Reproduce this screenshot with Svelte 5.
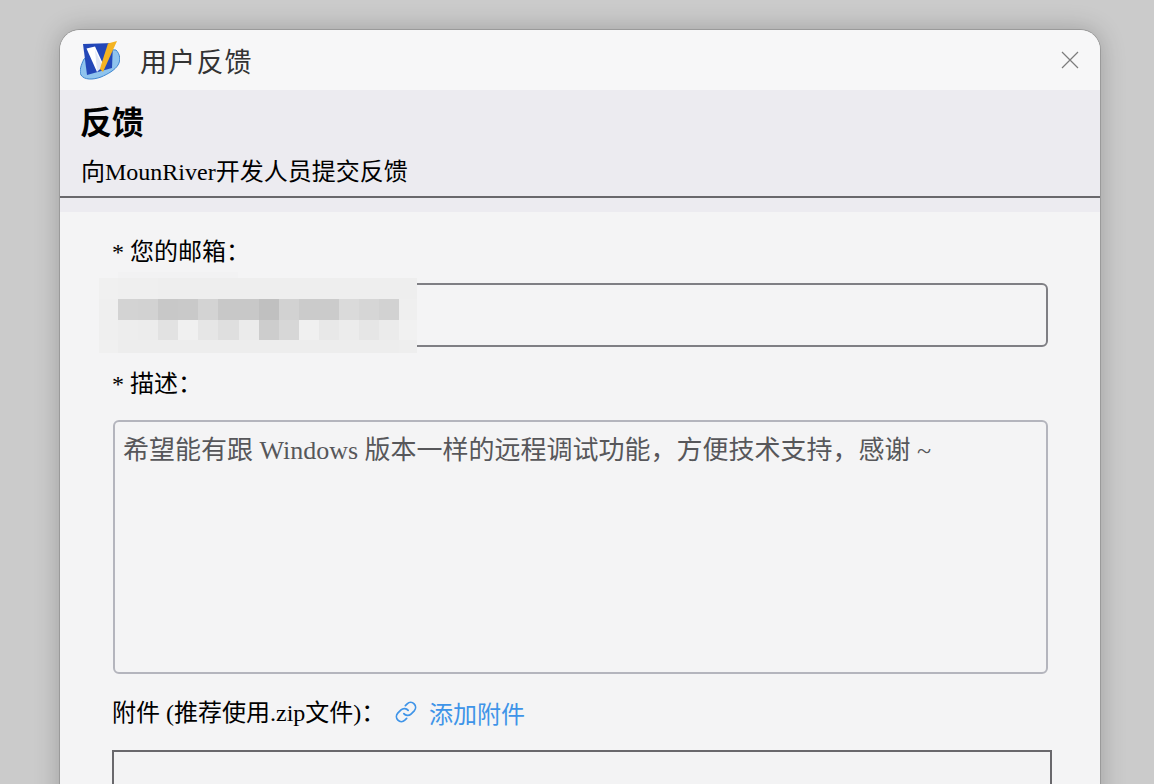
<script>
  // pixelated block hiding the e-mail address
  const mosaic = [
    ['#f0f0f0','#efefef','#efefef','#eeeeee','#eeeeee','#eeeeee','#eeeeee','#eeeeee','#eeeeee','#eeeeee','#eeeeee','#eeeeee','#eeeeee','#eeeeee','#eeeeee','#eeeeee'],
    ['#efefef','#d3d3d3','#d2d2d2','#c8c8c8','#c9c9c9','#d3d3d3','#c8c8c8','#c8c8c8','#c0c0c0','#d2d2d2','#cbcbcb','#cbcbcb','#dadada','#d6d6d6','#d2d2d2','#efefef'],
    ['#efefef','#ededed','#ececec','#e2e2e2','#f0f0f0','#e6e6e6','#dfdfdf','#ebebeb','#cdcdcd','#d7d7d7','#f0f0f0','#e8e8e8','#ececec','#e6e6e6','#ebebeb','#f1f1f1'],
    ['#f0f0f0','#ededed','#ededed','#ededed','#ededed','#ededed','#ededed','#ededed','#ededed','#ededed','#ededed','#ededed','#ededed','#ededed','#ededed','#eeeeee']
  ];
</script>

<div class="desk">
  <div class="window">
    <div class="titlebar">
      <svg class="logo" viewBox="0 0 40 40" width="40" height="40">
        <path d="M4 18 C1 24 -1 30 1 34 C4 39 13 39 21 36 C28 33 35 29 38 24 C41 19 40 13 36 9 L20 8 Z" fill="#8fc4ee" stroke="#3f86cf" stroke-width="1"/>
        <path d="M3 3 L33 2 L32 27 L7 34 Z" fill="#2347b8"/>
        <path d="M6.5 7.5 L15 5.5 L23.5 24 L17 31 Z" fill="#fff"/>
        <path d="M15 9 L23 26 L17 30 Z" fill="#dfe6f5"/>
        <path d="M28 2.5 L37 0 L23 31 L20 28 L21.7 22 Z" fill="#f4b321"/>
      </svg>
      <span class="app-title">用户反馈</span>
      <svg class="close" viewBox="0 0 18 18" width="18" height="18">
        <path d="M1 1 L17 17 M17 1 L1 17" stroke="#7c7c7c" stroke-width="1.2" fill="none"/>
      </svg>
    </div>

    <div class="head">
      <h1>反馈</h1>
      <p>向MounRiver开发人员提交反馈</p>
    </div>

    <div class="form">
      <label class="email-label" for="email">* 您的邮箱：</label>
      <div class="email-wrap">
        <input id="email" type="text" />
        <div class="mosaic">
          {#each mosaic as row}
            {#each row as c}
              <i style="background:{c}"></i>
            {/each}
          {/each}
        </div>
      </div>

      <label class="desc-label" for="desc">* 描述：</label>
      <textarea id="desc">希望能有跟 Windows 版本一样的远程调试功能，方便技术支持，感谢 ~</textarea>

      <div class="attach">
        <span>附件 (推荐使用.zip文件)：</span>
        <a href="#add">
          <svg viewBox="0 0 24 24" width="26" height="26" fill="none" stroke="#3f94e8" stroke-width="1.6" stroke-linecap="round" stroke-linejoin="round">
            <path d="M10 13.5a4.5 4.5 0 0 0 6.6.4l3-3a4.6 4.6 0 0 0-6.5-6.5l-1.7 1.7"/>
            <path d="M14 10.5a4.5 4.5 0 0 0-6.6-.4l-3 3a4.6 4.6 0 0 0 6.5 6.5l1.7-1.7"/>
          </svg>
          添加附件
        </a>
      </div>

      <div class="filebox"></div>
    </div>
  </div>
</div>

<style>
  :global(body){margin:0;background:#cbcbcb}
  .desk{height:784px;overflow:hidden;padding:30px 54px 0 60px;box-sizing:border-box;background:#cbcbcb;font-family:"Liberation Serif","Noto Sans CJK SC",serif;color:#000}
  .window{width:1040px;height:800px;background:#f4f4f5;border-radius:20px 20px 0 0;box-shadow:0 0 0 1px #9a9a9a,0 0 26px rgba(0,0,0,.24);overflow:hidden}
  .titlebar{height:60px;background:#f7f7f8;display:flex;align-items:center;padding:0 21px 0 20px}
  .logo{flex:none;margin-top:2px}
  .app-title{margin-left:20px;font-size:27px;color:#333;letter-spacing:1.2px}
  .close{margin-left:auto}
  .head{height:122px;box-sizing:border-box;background:#ecebf0;padding-top:14px;position:relative}
  .head h1{margin:0 0 0 20px;font-size:32px;line-height:38px;font-weight:700;color:#000}
  .head p{margin:15px 0 0 21px;font-size:24px;line-height:30px}
  .head::after{content:"";position:absolute;left:0;right:0;top:106px;height:2px;background:#69686c}
  .form{padding:24px 48px 0 53px}
  label{display:block;font-size:24px;line-height:32px;margin-left:-1px}
  .email-wrap{position:relative;margin-top:15px}
  input{display:block;box-sizing:border-box;width:935px;height:64px;background:#f4f4f5;border:2px solid #7f7f84;border-radius:6px;outline:none}
  .mosaic{position:absolute;left:-14px;top:-5px;width:318px;height:75px;display:grid;grid-template-columns:19px repeat(14,20.1px) 17.6px;grid-template-rows:21px 21px 20px 13px}
  .mosaic::before{content:"";position:absolute;left:19px;top:-6px;width:120px;height:6px;background:#f2f2f3}
  .desc-label{margin-top:21px}
  textarea{display:block;box-sizing:border-box;width:935px;height:254px;margin-top:20px;padding:13px 8px;background:#f4f4f5;border:2px solid #b4b5bd;border-radius:6px;font-family:inherit;font-size:26px;line-height:32px;color:#57575a;resize:none;outline:none}
  .attach{display:flex;align-items:center;margin-top:20px;font-size:24px;height:36px;margin-left:-1px}
  .attach span{width:281px;margin-bottom:4px}
  .attach a{display:flex;align-items:center;gap:10px;color:#3f94e8;text-decoration:none;font-size:24px}
  .filebox{box-sizing:border-box;width:940px;height:100px;margin-top:20px;margin-left:-1px;border:2px solid #69686c;background:#f3f3f4}
</style>
